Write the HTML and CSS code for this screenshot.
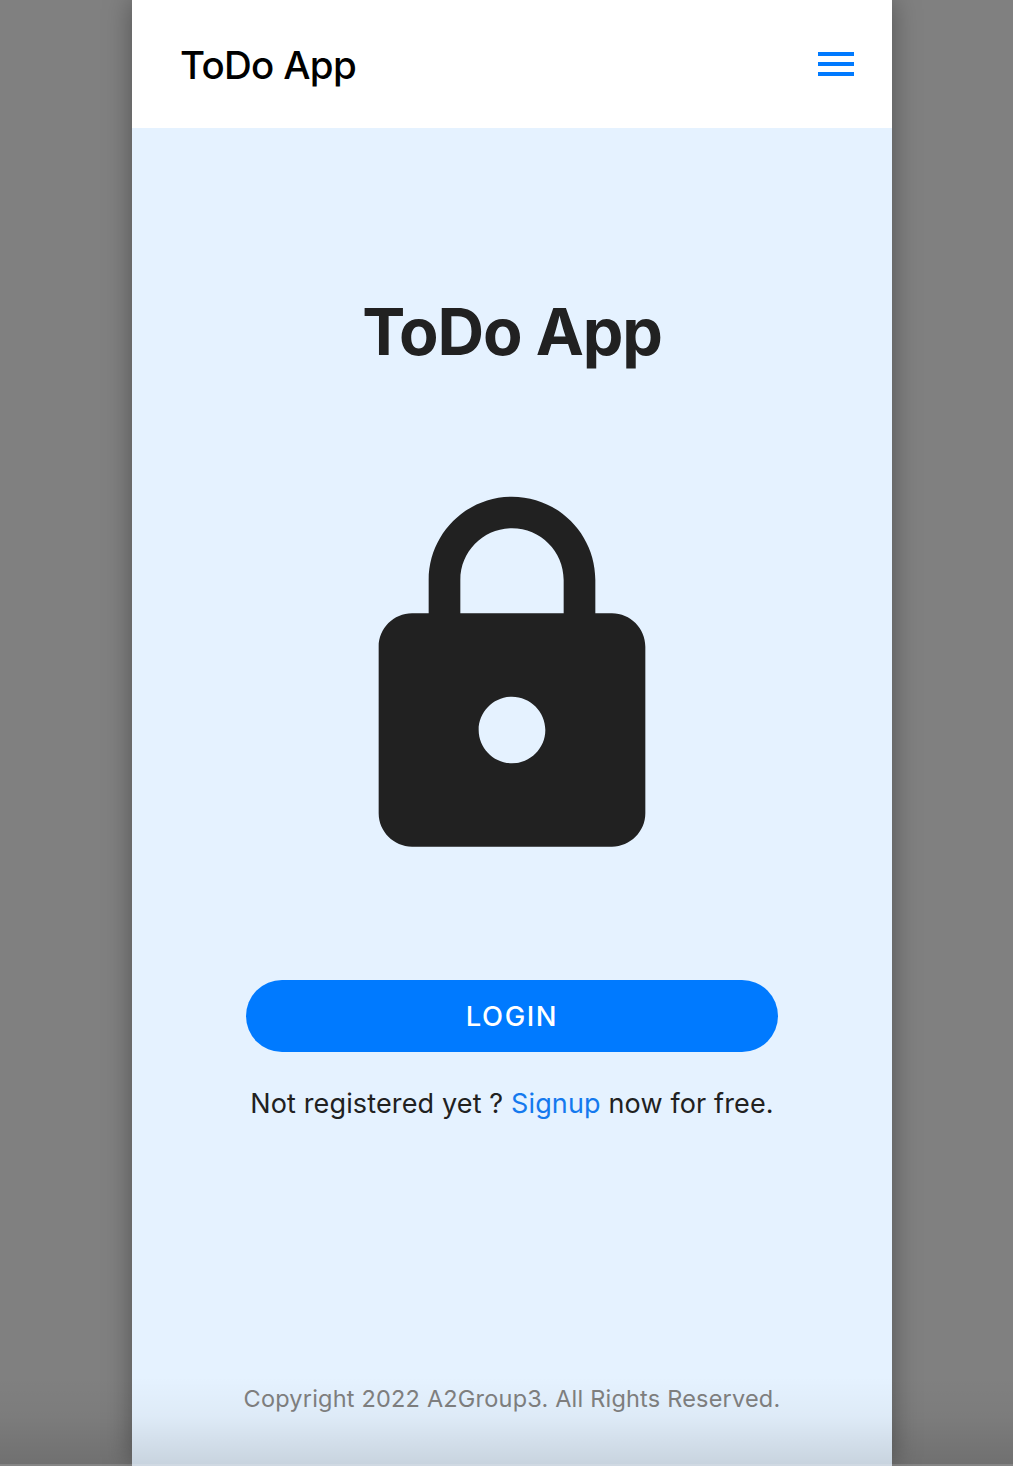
FILE: index.html
```html
<!DOCTYPE html>
<html lang="en">
<head>
<meta charset="utf-8">
<title>ToDo App</title>
<link rel="stylesheet" href="styles.css">
</head>
<body>
<div class="app">
  <header class="toolbar">
    <span class="toolbar-title">ToDo App</span>
    <button class="menu-button" aria-label="Menu">
      <svg width="36" height="24" viewBox="0 0 36 24" fill="#007aff" shape-rendering="crispEdges"><path d="M0 0h36v4H0zM0 10h36v4H0zM0 20h36v4H0z"/></svg>
    </button>
  </header>
  <main class="content">
    <h1 class="title">ToDo App</h1>
    <svg class="lock" viewBox="0 0 24 24" fill="#212121"><path d="M18 8h-1V6c0-2.76-2.24-5-5-5S7 3.24 7 6v2H6c-1.1 0-2 .9-2 2v10c0 1.1.9 2 2 2h12c1.1 0 2-.9 2-2V10c0-1.1-.9-2-2-2zm-6 9c-1.1 0-2-.9-2-2s.9-2 2-2 2 .9 2 2-.9 2-2 2zm3.1-9H8.9V6c0-1.71 1.39-3.1 3.1-3.1 1.71 0 3.1 1.39 3.1 3.1v2z"/></svg>
    <button class="login">LOGIN</button>
    <p class="signup">Not registered yet ? <a class="link" href="#">Signup</a> now for free.</p>
  </main>
  <footer class="footer">Copyright 2022 A2Group3. All Rights Reserved.</footer>
</div>
<div class="bottom-shade"></div>
</body>
</html>
```
FILE: styles.css
```css
* { box-sizing: border-box; }

body {
  margin: 0;
  height: 1466px;
  overflow: hidden;
  background: #808080;
  font-family: Inter, "Liberation Sans", sans-serif;
  color: #212121;
}

.app {
  display: flex;
  flex-direction: column;
  width: 760px;
  height: 1466px;
  margin-left: 132px;
  background: #e5f2ff;
  box-shadow: 0 0 26px rgba(0, 0, 0, 0.36);
}

.toolbar {
  display: flex;
  align-items: center;
  justify-content: space-between;
  height: 128px;
  padding: 0 38px 0 48px;
  background: #fff;
}

.toolbar-title {
  padding-top: 2px;
  font-size: 38.5px;
  font-weight: 500;
  letter-spacing: -0.7px;
  color: #000;
}

.menu-button {
  display: flex;
  padding: 0;
  border: 0;
  background: none;
}

.content {
  display: flex;
  flex: 1;
  flex-direction: column;
  align-items: center;
  padding-top: 164px;
}

.title {
  margin: 0 0 108px;
  font-size: 64.5px;
  line-height: 80px;
  font-weight: 700;
  letter-spacing: -1.1px;
}

.lock {
  width: 400px;
  height: 400px;
  margin-bottom: 100px;
}

.login {
  width: 532px;
  height: 72px;
  padding: 1px 0 0;
  border: 0;
  border-radius: 36px;
  background: #007aff;
  color: #fff;
  font: 500 27.4px/71px Inter, sans-serif;
  letter-spacing: 1.6px;
}

.signup {
  margin: 32px 0 0;
  font-size: 27px;
  line-height: 40px;
  letter-spacing: 0.14px;
  white-space: nowrap;
}

.link {
  color: #1479ee;
  text-decoration: none;
}

.footer {
  height: 87px;
  color: #808080;
  font-size: 23.5px;
  line-height: 40px;
  letter-spacing: 0.2px;
  text-align: center;
  white-space: nowrap;
}

.bottom-shade {
  position: absolute;
  left: 0;
  right: 0;
  top: 1376px;
  height: 90px;
  border-bottom: 2px solid rgba(255, 255, 255, 0.15);
  background: linear-gradient(rgba(0, 0, 0, 0), rgba(0, 0, 0, 0.03) 45%, rgba(0, 0, 0, 0.13)) border-box;
}
```
